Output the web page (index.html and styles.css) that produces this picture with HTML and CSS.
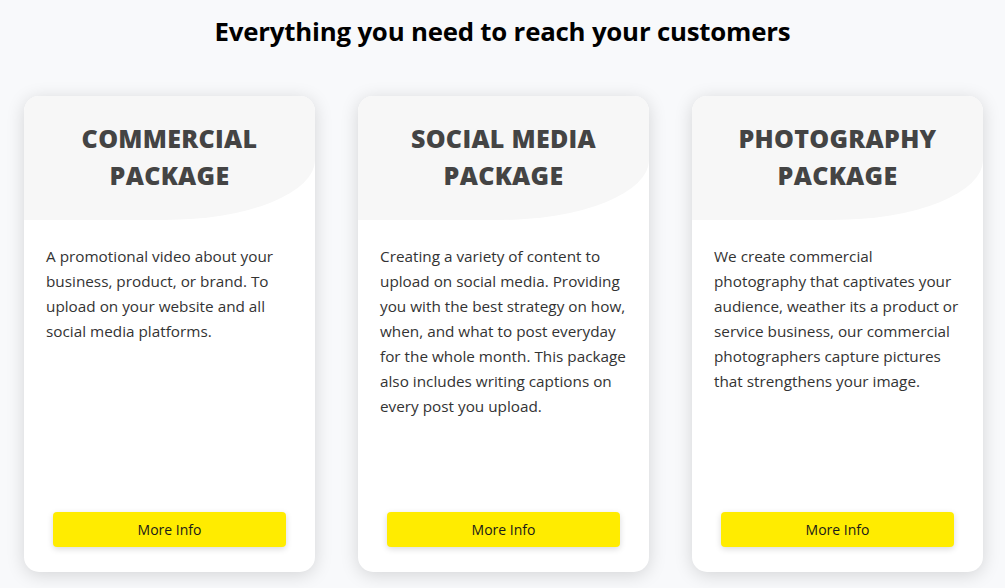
FILE: index.html
```html
<!DOCTYPE html>
<html lang="en">
<head>
<meta charset="utf-8">
<title>Packages</title>
<link rel="stylesheet" href="styles.css">
</head>
<body>
<section class="packages">
  <h1 class="packages-title">Everything you need to reach your customers</h1>
  <div class="cards">
    <article class="card">
      <header class="card-head"><h2 class="card-title">Commercial<br>Package</h2></header>
      <p class="card-text">A promotional video about your business, product, or brand. To upload on your website and all social media platforms.</p>
      <div class="card-foot"><button class="btn">More Info</button></div>
    </article>
    <article class="card">
      <header class="card-head"><h2 class="card-title">Social Media<br>Package</h2></header>
      <p class="card-text">Creating a variety of content to upload on social media. Providing you with the best strategy on how, when, and what to post everyday for the whole month. This package also includes writing captions on every post you upload.</p>
      <div class="card-foot"><button class="btn">More Info</button></div>
    </article>
    <article class="card">
      <header class="card-head"><h2 class="card-title">Photography<br>Package</h2></header>
      <p class="card-text">We create commercial photography that captivates your audience, weather its a product or service business, our commercial photographers capture pictures that strengthens your image.</p>
      <div class="card-foot"><button class="btn">More Info</button></div>
    </article>
  </div>
</section>
</body>
</html>
```
FILE: styles.css
```css
* { box-sizing: border-box; }
html, body { margin: 0; padding: 0; }
body {
  background: #f8f9fb;
  font-family: "Open Sans", "Noto Sans", sans-serif;
  width: 1005px;
  height: 588px;
  overflow: hidden;
}
.packages {
  padding-top: 13px;
}
.packages-title {
  margin: 0;
  text-align: center;
  font-size: 25.8px;
  font-weight: 700;
  line-height: 36px;
  color: #000;
  letter-spacing: -0.2px;
}
.cards {
  display: flex;
  gap: 43px;
  padding-left: 24px;
  margin-top: 47px;
}
.card {
  width: 291px;
  height: 476px;
  background: #fff;
  border-radius: 15px;
  box-shadow: 0 3px 18px rgba(0,0,0,0.15);
  display: flex;
  flex-direction: column;
  overflow: hidden;
}
.card-head {
  background: #f7f7f7;
  height: 124px;
  border-bottom-right-radius: 150px 60px;
  padding-top: 24px;
}
.card-title {
  margin: 0;
  text-align: center;
  text-transform: uppercase;
  font-size: 25px;
  font-weight: 800;
  line-height: 37px;
  letter-spacing: 0.3px;
  color: #444;
}
.card-text {
  margin: 0;
  padding: 24px 22px 0;
  font-size: 15.3px;
  line-height: 25px;
  color: #333;
}
.card-foot {
  margin-top: auto;
  padding: 0 29px 25px;
}
.btn {
  display: block;
  width: 100%;
  height: 35px;
  border: 0;
  border-radius: 4px;
  background: #ffec00;
  box-shadow: 0 2px 6px rgba(0,0,0,0.15);
  font-family: inherit;
  font-size: 14px;
  color: #1a1a1a;
  cursor: pointer;
}
```
